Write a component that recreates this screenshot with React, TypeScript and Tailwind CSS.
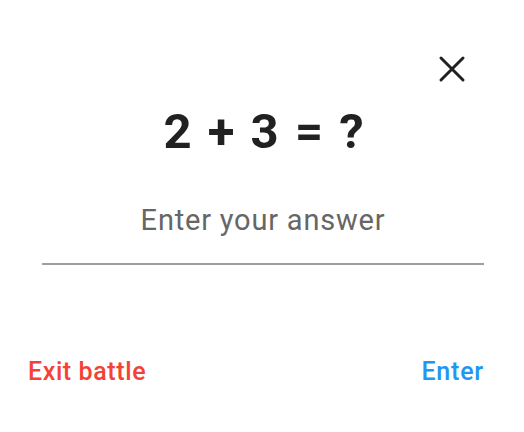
import React from "react";

export default function App() {
  return (
    <div className="w-[524px] h-[432px] bg-white relative" style={{ fontFamily: "Roboto, 'Noto Sans', sans-serif" }}>
      <button className="absolute left-[434px] top-[51px] w-[36px] h-[36px] flex items-center justify-center">
        <svg width="28" height="28" viewBox="0 0 28 28">
          <path d="M3 3 L25 25 M25 3 L3 25" stroke="#212121" strokeWidth="3" strokeLinecap="round" />
        </svg>
      </button>
      <div className="flex flex-col pt-[104px] pl-[42px] pr-[40px]">
        <div className="text-center text-[49px] font-bold text-[#212121] leading-[56px] tracking-[2px] pl-[3px]">2 + 3 = ?</div>
        <div className="mt-[40px] border-b-2 border-[#9e9e9e] pb-[23px]">
          <div className="text-center text-[29px] text-[#666666] leading-[40px] tracking-[0.8px]">Enter your answer</div>
        </div>
      </div>
      <div className="flex justify-between px-[28px] pr-[40px] mt-[93px]">
        <span className="text-[25px] font-medium text-[#f44336] leading-[28px] tracking-[0.6px]">Exit battle</span>
        <span className="text-[25px] font-medium text-[#2196f3] leading-[28px] tracking-[0.8px]">Enter</span>
      </div>
    </div>
  );
}
